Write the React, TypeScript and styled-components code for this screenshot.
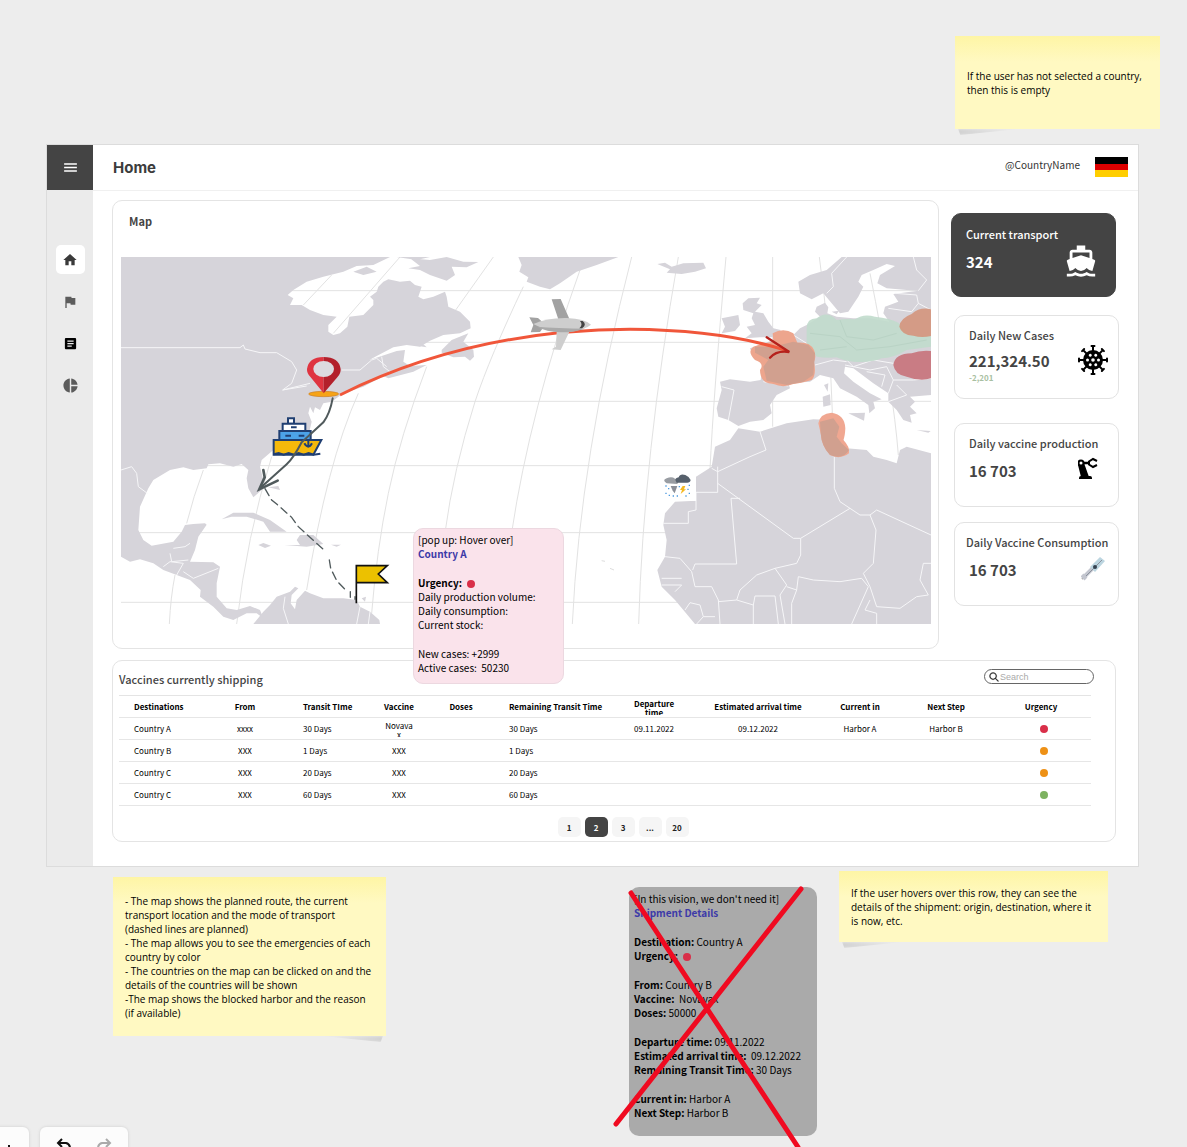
import React from "react";
import styled, { createGlobalStyle } from "styled-components";
import {
  MdArticle,
  MdDirectionsBoat,
  MdFlag,
  MdHome,
  MdMenu,
  MdPieChart,
} from "react-icons/md";
import { IoIosSearch } from "react-icons/io";

const sans = `"Noto Sans CJK SC", "Noto Sans", sans-serif`;

const GlobalStyle = createGlobalStyle`
  * { box-sizing: border-box; }
  body {
    margin: 0;
    background: #ededed;
    font-family: ${sans};
    color: #000;
  }
  button, input { font-family: inherit; }
  p, h1, h2, dl, dd { margin: 0; }
`;

/* ---------- Board ---------- */

const Board = styled.div`
  position: relative;
  min-height: 100vh;
  padding-top: 36px;
  overflow: hidden;
`;

const TopNotes = styled.div`
  display: flex;
  justify-content: flex-end;
  padding-right: 27px;
  margin-bottom: 15px;
`;

const BottomNotes = styled.div`
  display: flex;
  justify-content: space-between;
  align-items: flex-start;
  height: 280px;
  padding: 4px 79px 0 113px;
`;

const NoteGroup = styled.div`
  display: flex;
  align-items: flex-start;
  gap: 22px;
`;

const Note = styled.aside<{ $w: number; $h: number; $curl: "left" | "right"; $drop?: number }>`
  position: relative;
  display: flex;
  flex-direction: column;
  justify-content: center;
  width: ${(p) => p.$w}px;
  min-height: ${(p) => p.$h}px;
  margin-top: ${(p) => p.$drop ?? 0}px;
  padding: 0 12px;
  background: linear-gradient(#fef5a5, #fff9c2 26px, #fff9c2);
  font: 500 10px/14px "Open Sans", "Noto Sans", sans-serif;
  &::after {
    content: "";
    position: absolute;
    top: 100%;
    ${(p) => p.$curl}: 3px;
    width: 60px;
    height: 6px;
    background: linear-gradient(to ${(p) => (p.$curl === "left" ? "right" : "left")}, #d2d2d2, #ededed);
    clip-path: ${(p) =>
      p.$curl === "left" ? "polygon(0 0, 100% 0, 4% 100%)" : "polygon(0 0, 100% 0, 96% 100%)"};
    filter: blur(1px);
  }
`;

/* ---------- App frame ---------- */

const Frame = styled.div`
  display: grid;
  grid-template-columns: 46px 1fr;
  margin: 0 48px 0 46px;
  border: 1px solid #dcdcdc;
  background: #fff;
`;

const Sidebar = styled.nav`
  display: flex;
  flex-direction: column;
  align-items: center;
  background: #ebebeb;
`;

const MenuButton = styled.button`
  display: grid;
  place-items: center;
  width: 46px;
  height: 45px;
  margin-bottom: 55px;
  padding: 0;
  border: 0;
  background: #444;
  color: #fff;
`;

const NavButton = styled.button<{ $active?: boolean; $tone?: string }>`
  display: grid;
  place-items: center;
  width: 29px;
  height: 29px;
  margin-bottom: 13px;
  padding: 0;
  border: 0;
  border-radius: 5px;
  background: ${(p) => (p.$active ? "#fff" : "transparent")};
  color: ${(p) => p.$tone ?? "#5c5c5c"};
`;

const Body = styled.div`
  min-width: 0;
`;

const Header = styled.header`
  display: flex;
  align-items: center;
  height: 46px;
  padding: 0 10px 0 20px;
  border-bottom: 1px solid #f0f0f0;
`;

const PageTitle = styled.h1`
  flex: 1;
  color: #3c3c3c;
  font: 700 15px/20px Inter, "Open Sans", sans-serif;
`;

const Country = styled.span`
  margin-right: 15px;
  padding-bottom: 6px;
  color: #333;
  font-size: 10px;
  line-height: 14px;
`;

const Flag = styled.div`
  width: 33px;
  height: 20px;
  margin-bottom: 2px;
  background: linear-gradient(#000 0 33%, #dd0000 33% 67%, #ffce00 67%);
`;

const Main = styled.main`
  position: relative;
  padding: 9px 19px 24px 19px;
`;

const TopRow = styled.div`
  display: grid;
  grid-template-columns: 1fr 168px;
  column-gap: 12px;
  margin-bottom: 11px;
`;

const Panel = styled.section`
  border: 1px solid #e4e4e4;
  border-radius: 10px;
  background: #fff;
`;

const MapPanel = styled(Panel)`
  padding: 10px 7px 24px 8px;
`;

const MapTitle = styled.h2`
  margin-bottom: 26px;
  padding-left: 8px;
  color: #444;
  font-size: 11px;
  line-height: 20px;
`;

const MapSvg = styled.svg`
  display: block;
  width: 100%;
  height: auto;
`;

/* ---------- Stat cards ---------- */

const Stats = styled.div`
  display: flex;
  flex-direction: column;
  padding-top: 13px;
`;

const Card = styled.article<{ $dark?: boolean; $gap: number; $lift: number }>`
  display: grid;
  grid-template-columns: 1fr 32px;
  align-content: start;
  width: 165px;
  height: 84px;
  margin: 0 0 ${(p) => p.$gap}px ${(p) => (p.$dark ? 0 : 3)}px;
  padding: ${(p) => (p.$dark ? "10px 18px 0 14px" : "9px 9px 0 14px")};
  border: 1px solid ${(p) => (p.$dark ? "#444" : "#e2e2e2")};
  border-radius: 10px;
  background: ${(p) => (p.$dark ? "#444" : "#fff")};
  color: ${(p) => (p.$dark ? "#fff" : "#444")};
  svg {
    align-self: start;
    justify-self: center;
    margin-top: -${(p) => p.$lift}px;
  }
`;

const CardTitle = styled.h2<{ $wide?: boolean }>`
  grid-column: 1 / -1;
  margin: 0 -8px 6px ${(p) => (p.$wide ? -3 : 0)}px;
  font-size: 11px;
  font-weight: 500;
  line-height: 20px;
  white-space: nowrap;
`;

const CardValue = styled.p<{ $tight?: boolean }>`
  font-size: 15px;
  font-weight: 700;
  line-height: ${(p) => (p.$tight ? 20 : 24)}px;
`;

const Delta = styled.p`
  color: #a9bfa2;
  font-size: 8px;
  font-weight: 700;
  line-height: 14px;
`;

/* ---------- Shipping table ---------- */

const ShippingPanel = styled(Panel)`
  margin-right: 3px;
  padding: 8px 24px 4px 6px;
`;

const ShippingHead = styled.div`
  display: flex;
  justify-content: space-between;
  align-items: flex-start;
  height: 26px;
  margin-right: -3px;
`;

const ShippingTitle = styled.h2`
  color: #444;
  font-size: 11px;
  font-weight: 500;
  line-height: 20px;
`;

const SearchBox = styled.label`
  display: flex;
  align-items: center;
  width: 110px;
  height: 15px;
  padding-left: 3px;
  border: 1px solid #666;
  border-radius: 8px;
  color: #222;
  svg {
    stroke: currentColor;
    stroke-width: 14px;
  }
`;

const SearchInput = styled.input`
  width: 80px;
  height: 12px;
  padding: 0;
  border: 0;
  outline: 0;
  background: transparent;
  font: 9px/12px "Liberation Sans", Arial, sans-serif;
  &::placeholder {
    color: #aaa;
  }
`;

const Table = styled.table`
  width: 100%;
  table-layout: fixed;
  border-collapse: collapse;
  border-top: 1px solid #e4e4e4;
  font-size: 8px;
  line-height: 9px;
`;

const Row = styled.tr`
  height: 22px;
  border-bottom: 1px solid #e6e6e6;
`;

type Align = "left" | "center";

const HeadCell = styled.th<{ $align: Align; $indent: number }>`
  padding: 0 0 0 ${(p) => (p.$align === "left" ? p.$indent : 0)}px;
  text-align: ${(p) => p.$align};
  font-weight: 700;
  white-space: pre;
`;

const Cell = styled.td<{ $align: Align; $indent: number }>`
  padding: 0 ${(p) => (p.$align === "center" ? p.$indent : 0)}px 0 ${(p) => p.$indent}px;
  text-align: ${(p) => p.$align};
  word-break: break-all;
`;

const UrgencyCell = styled.td`
  padding: 0 0 0 5px;
  text-align: center;
`;

const TwoLines = styled.div`
  max-height: 16px;
  overflow: hidden;
`;

const Dot = styled.span<{ $color: string }>`
  display: inline-block;
  width: 8px;
  height: 8px;
  border-radius: 50%;
  background: ${(p) => p.$color};
  vertical-align: middle;
`;

const Pager = styled.nav`
  display: flex;
  justify-content: center;
  gap: 4px;
  padding: 11px 0 0 36px;
`;

const PageButton = styled.button<{ $current?: boolean }>`
  width: 23px;
  height: 20px;
  padding: 0;
  border: 0;
  border-radius: 5px;
  background: ${(p) => (p.$current ? "#444" : "#f5f5f5")};
  color: ${(p) => (p.$current ? "#fff" : "#222")};
  font-size: 8px;
  font-weight: 700;
`;

/* ---------- Info boxes ---------- */

const InfoBox = styled.div`
  font-size: 10px;
  line-height: 14px;
  white-space: pre;
`;

const CountryPopup = styled(InfoBox)`
  position: absolute;
  top: 337px;
  left: 320px;
  width: 151px;
  height: 156px;
  padding: 4px;
  border: 1px solid #ecd8e0;
  border-radius: 10px;
  background: #fae3eb;
`;

const ShipmentBox = styled(InfoBox)`
  position: relative;
  width: 188px;
  height: 249px;
  margin-top: 16px;
  padding: 5px;
  border-radius: 10px;
  background: #aaa;
`;

const Group = styled.div`
  margin-bottom: 15px;
`;

const Blue = styled.strong`
  color: #3d3aa8;
`;

const CrossOut = styled.svg`
  position: absolute;
  top: -2px;
  left: -17px;
  width: 194px;
  height: 270px;
`;

/* ---------- Board toolbars ---------- */

const Toolbars = styled.div`
  position: absolute;
  top: 1127px;
  left: -20px;
  display: flex;
  gap: 11px;
`;

const Toolbar = styled.div<{ $w: number }>`
  display: flex;
  justify-content: space-around;
  width: ${(p) => p.$w}px;
  height: 40px;
  padding: 10px 4px 0;
  border-radius: 6px;
  background: #fcfcfc;
  box-shadow: 0 0 3px #ccc;
`;

const ToolButton = styled.button`
  display: grid;
  place-items: center;
  width: 20px;
  height: 20px;
  padding: 0;
  border: 0;
  background: transparent;
`;

/* ---------- Drawings ---------- */

const Virus = () => (
  <svg width="32" height="32" viewBox="-16 -16 32 32">
    <circle r="10" />
    {[0, 45, 90, 135, 180, 225, 270, 315].map((a) => (
      <g key={a} transform={`rotate(${a})`}>
        <path d="M0-9V-13M-1.500-14H1.500" stroke="#000" strokeWidth="2" strokeLinecap="round" />
      </g>
    ))}
    <g fill="#fff">
      <circle r="1.800" />
      {[0, 60, 120, 180, 240, 300].map((a) => (
        <circle key={a} cx="5.500" r="1.500" transform={`rotate(${a})`} />
      ))}
    </g>
  </svg>
);

const RobotArm = () => (
  <svg width="30" height="24" viewBox="3 0 30 24" fill="none" stroke="#000">
    <path d="M3 8 9 6 14 20H6Z" fill="#000" stroke="none" />
    <path d="M4 22v-1q0-2 2-2h9q2 0 2 2v1Z" fill="#000" stroke="none" />
    <circle cx="6" cy="6" r="2.500" fill="#fff" strokeWidth="2" />
    <path d="M9 6h5" strokeWidth="2.500" />
    <path d="M22 4 18 2l-4 2.500v3L18 10l4-2" strokeWidth="2" />
  </svg>
);

const Syringe = () => (
  <svg width="24" height="26" viewBox="0 0 24 26">
    <path d="M1 23 4 20" stroke="#aaa" strokeWidth="2" />
    <path d="M1 19 5 23M3 21 14 10" stroke="#c3c6cf" strokeWidth="4" />
    <path d="M9 11 19 1 24 5 14 16Z" fill="#bcd5e0" />
    <path d="M5 20 21 4" stroke="#8b929d" strokeWidth="1" />
    <circle cx="14" cy="11" r="2" fill="#344250" />
  </svg>
);

const WorldMap = () => (
  <MapSvg viewBox="33 21 2430 1101" role="img" aria-label="Shipping routes across the Atlantic">
    <path
      fill="none"
      stroke="#e2e2e2"
      strokeWidth="3"
      d="M33 122H2463M33 277H2463M33 454H2463M33 647H2463M33 848H2463M33 1057H2463
      M195 975Q182 1040 178 1122M280 660Q250 740 230 820M485 620Q410 860 380 1122M665 75 580 165
      M870 21 670 250M1150 21 1030 190M745 430Q650 640 590 1020
      M950 350Q870 560 835 730Q800 900 785 1090
      M1240 110Q1140 320 1095 455Q1030 660 1005 848
      M1410 60Q1260 480 1205 848M1565 21Q1410 620 1387 1122M1705 21Q1600 620 1586 1122
      M1848 21Q1810 440 1800 660M1988 21V530M2128 21Q2160 250 2168 510M2280 70Q2350 420 2365 615"
    />
    <g fill="#d6d4da">
      <path d="M33 21H840L790 45 740 48 700 65 640 80 590 95 550 120 533 135 550 145 540 165 575 165 600 180 640 195 680 200 655 225 655 245 670 255 690 250 712 230 718 200 760 195 790 165 790 150 780 140 800 125 805 110 820 95 835 88 870 95 900 92 915 105 935 110 925 140 940 148 970 140 1005 125 1010 140 1015 170 1050 185 1080 215 1082 235 1050 250 1000 255 960 272 930 290 890 285 850 292 800 318 778 330 815 318 860 303 885 300 880 335 900 348 950 345 910 365 835 385 820 378 760 410 700 430 665 455 640 460 630 480 615 472 610 490 600 470 595 490 605 515 598 545 580 560 490 600 455 630 450 650 460 690 455 720 430 742 415 715 410 685 415 660 395 642 370 650 330 640 295 643 290 655 250 660 220 652 180 660 130 690 115 715 90 770 85 840 100 870 125 887 190 875 215 845 225 825 250 822 285 820 290 824 265 860 255 900 240 935 310 937 330 950 320 1000 320 1040 350 1075 380 1080 420 1068 450 1080 460 1105 440 1090 410 1090 370 1110 340 1100 310 1070 270 1040 272 1020 240 990 200 975 160 960 130 940 90 928 60 935 33 920Z" />
      <path d="M430 1122 460 1085 480 1065 500 1040 540 1025 555 1010 565 1015 545 1035 542 1060 555 1078 560 1050 585 1022 600 1030 640 1045 700 1045 740 1050 750 1070 780 1085 808 1110 810 1122Z" />
      <path d="M335 808 370 788 430 788 480 810 530 845 480 845 460 815 410 800 365 800ZM523 885 570 885 560 870 570 855 610 855 640 882 590 890ZM445 885 460 879 483 887 465 894ZM663 884H693L680 890ZM730 65 770 50 800 65 760 75ZM475 712 505 708 510 720M755 1045 768 1040 765 1055Z" />
      <path d="M860 21 960 21 920 30ZM900 25 960 30 1010 21 1060 35 1105 36 1070 52 1025 50 1035 75 1010 92 960 75 930 60 895 55 930 48Z" />
      <path d="M1225 21 1235 45 1228 65 1255 82 1250 95 1290 110 1320 118 1350 100 1400 65 1460 45 1515 25 1525 21Z" />
      <path d="M995 300 1025 270 1075 250 1060 275 1090 300 1092 320 1080 332 1065 320 1030 322 995 308ZM918 280 940 283 950 292 925 288Z" />
    </g>
    <g transform="translate(1590)">
      <g fill="#d6d4da">
        <path d="M52 42 75 38 95 50 130 40 190 38 198 55 165 65 125 72 80 68 90 58Z" />
        <path d="M325 145 360 143 350 160 365 165 345 185 370 190 385 215 400 235 422 240 410 262 360 262 315 265 335 250 320 230 345 225 335 205 340 190 310 180 308 160ZM245 205 295 195 300 225 285 243 245 250 255 230Z" />
        <path d="M605 21 560 60 510 75 475 95 480 130 515 148 550 130 575 160 600 190 625 185 655 140 670 110 655 95 665 75 700 60 740 42 765 48 720 75 712 100 740 115 800 120 835 122 760 132 775 155 735 170 730 190 748 215 690 205 640 205 590 200 562 190 565 172 555 158 530 170 525 185 540 200 500 225 480 235 460 255 400 270 330 295 340 320 370 340 365 370 362 390 330 395 270 388 240 395 245 420 230 475 235 500 265 510 295 528 330 515 370 510 395 490 390 465 410 435 450 415 445 400 510 395 540 375 580 385 600 415 650 440 685 465 688 490 705 475 700 455 725 448 690 430 640 395 612 370 615 350 640 355 700 400 745 430 745 455 770 480 790 510 815 518 810 495 830 490 810 470 825 455 810 440 873 435V21Z" />
        <path d="M873 610 800 590 780 600 770 640 740 630 700 620 680 600 620 595 600 540 575 510 520 508 440 520 360 545 295 535 270 570 225 590 215 650 168 680V752L105 755 75 790 70 825 80 870 75 920 52 960 65 1010 105 1050 130 1080 165 1122H873Z" />
        <path d="M548 440 570 433 572 465 550 470ZM552 405 565 400 563 425ZM625 490 675 488 672 512ZM830 540 872 543 865 548ZM575 185 597 182 590 193Z" />
      </g>
      <g fill="none" stroke="#f6f6f8" strokeWidth="3">
        <path d="M233 650V727H168V780L145 785V820H70M215 655 233 665 330 620 378 600 360 545M233 700 460 865H482L630 775 600 755 583 715V620M630 775 660 795H690L710 780 873 855M273 745 290 942H165L158 960M482 865V915L470 940 405 955 350 975 300 1020 290 1050 340 1065 345 1038H405L415 1122M273 745 300 745M690 795 708 840 700 940 670 970 690 1010 710 1070 780 1075 830 1040 865 1035 840 990 850 940H873M405 955 440 1005 420 1035 435 1122M440 1010 470 1020 455 1060V1122M470 1020 475 980 520 990 600 995 665 985 685 1010 635 1122M75 920 120 925 155 965 165 1010 215 1010 235 1050 240 1122M65 1005H125L105 1025M65 985 125 985M235 1055 290 1050M340 1065V1122M135 1080 150 1058 180 1065 190 1100 170 1122M190 1100H225M690 1050 675 1080 710 1090V1122" />
        <path d="M620 21 575 70 580 110 560 130M820 21 830 60 860 90 835 122M765 130 830 135 835 160 815 185 745 175M835 160 873 180M245 410 282 420 265 510M370 395 445 408M615 345 690 360 740 350 760 390 745 430M680 365 735 375 725 410M760 390 820 390 873 385M745 455 800 435M620 330 640 350 700 330 760 340M460 255 500 280M800 435 770 405M525 345 580 330 620 335" />
      </g>
      <path fill="#c1dbcc" fillOpacity=".9" d="M500 235Q500 205 530 205 560 180 590 210 620 205 645 208 670 190 705 200 750 205 775 218L810 255 873 258V290L800 300Q760 325 725 325 690 340 640 335 610 332 590 322 560 325 530 320L500 280Z" />
      <path d="M510 250 600 260 650 300 750 290 860 270M600 210 620 260 700 270 770 250M540 300 620 290" fill="none" stroke="#b9d3c5" strokeWidth="3" />
      <path fill="#d4957c" fillOpacity=".9" d="M873 178Q840 170 815 192 780 205 778 230 785 255 820 257 845 265 873 258Z" />
      <path fill="#c97c84" d="M873 303Q840 300 815 310 765 310 760 345 765 375 800 380 840 395 873 385Z" />
      <path fill="#eda58d" d="M398 250Q430 232 460 250L472 278Q510 275 522 300 530 320 522 335 530 375 515 390 480 400 460 402 430 415 400 402 360 400 360 360 375 340 345 330 320 305 340 290 370 280 400 275Z" />
      <path fill="#d1a08f" d="M345 290 400 290 460 275 505 285 525 310 520 375 490 395 440 405 380 392 370 350 385 330 345 308Z" />
      <path fill="#f0a791" d="M535 520Q540 490 575 488 615 495 616 535 615 560 610 570 630 590 627 610 600 630 570 615 545 590 542 550Z" />
      <path fill="#d1a08f" d="M540 515 580 505 598 530 590 560 605 580 627 600Q610 630 570 615 545 590 542 550Z" />
      <g>
        <path fill="#fff" d="M66 672H168V752H66Z" />
        <path fill="#999da3" d="M80 700Q65 690 80 685 95 678 105 686 120 690 112 702Z" />
        <path fill="#56606c" d="M110 698Q100 685 116 682 120 670 136 675 148 680 152 690 150 700 138 698Z" />
        <path fill="#8b8f98" d="M92 708H112L104 730 98 722Z" />
        <path fill="#f5b921" d="M128 708H136L132 718H138L122 732 126 720H120Z" />
        <path d="M78 706v4M86 714v4M78 728v4M88 734v4M100 736v4M112 736v4M118 708v4M148 704v4M144 716v4M148 728v4M138 736v4" stroke="#4d9ae0" strokeWidth="4" />
      </g>
    </g>
    <g fill="none" stroke="#f6f6f8" strokeWidth="3">
      <path d="M33 293H390L400 285 405 297 450 308 500 308 545 335 560 360 545 400 518 420 600 400M695 360H750L785 330 800 325 830 350M518 420 590 408M33 660 65 650 80 670 85 710 112 730M180 910 185 935 235 930M160 950 180 935 220 940 200 975M220 965 250 985 325 955M190 895 225 890 240 880M525 1040 520 1075 535 1122M750 1070 740 1122M780 1085 775 1122M815 320 820 350 840 365" />
    </g>
    <path d="M690 435Q1080 240 1560 238 1840 240 2030 302" fill="none" stroke="#f0563a" strokeWidth="9" />
    <path d="M1970 262 2038 306Q2000 300 1980 323" fill="none" stroke="#b5211c" strokeWidth="7" strokeLinecap="round" />
    <g>
      <path fill="#a2a2a2" d="M1325 148 1352 147 1378 206 1345 208ZM1258 202 1284 204 1306 224 1290 246 1262 247 1270 225Z" />
      <path fill="#cecece" d="M1340 245 1378 245 1352 300 1325 298 1338 290Z" />
      <path fill="#cecece" d="M1270 222Q1310 203 1370 204 1425 206 1443 224 1425 240 1370 247 1310 245 1270 222Z" />
      <path fill="#aaa" d="M1280 230Q1340 235 1425 236 1390 248 1350 247 1310 245 1280 230Z" />
      <path d="M1410 213H1418Q1432 224 1416 235H1408Q1420 224 1410 213Z" fill="#444" />
    </g>
    <g>
      <ellipse cx="641" cy="432" rx="45" ry="8" fill="#f6a316" stroke="#c87e28" strokeWidth="2" />
      <path fill="#df3440" d="M641 430 602 382Q590 370 591 357 596 321 641 321Z" />
      <path fill="#b3202b" d="M641 430 682 382Q693 370 692 357 687 321 641 321Z" />
      <ellipse cx="641" cy="357" rx="31" ry="24" fill="#dcdadf" />
    </g>
    <g stroke="#203f72" strokeWidth="6">
      <path fill="#fff" d="M534 505H552V521H534Z" />
      <path fill="#fff" d="M518 521H586V543H518Z" />
      <path fill="#4ca3e8" d="M508 543H602V570H508Z" />
      <path fill="#f5b90b" d="M491 570H634L610 614H491Z" />
      <path d="M543 532H560M526 557H543M566 557H583" />
      <path fill="none" d="M595 568V592M583 580Q595 600 606 580M491 613l15-4 15 5 15-5 15 5 15-5 15 5 15-5 15 5 20-3" />
    </g>
    <g fill="none" stroke="#505a5c" strokeLinecap="round">
      <path strokeWidth="6" d="M668 445Q660 490 640 517L575 577Q550 625 530 643L450 715" />
      <path strokeWidth="8" d="M460 660 464 682 448 718 503 692" />
      <path strokeWidth="4" strokeDasharray="24 14" d="M465 716 485 750 500 762 545 802 565 830 642 900M658 930 662 955 680 992 705 1018" />
      <path strokeWidth="4" d="M721 1025V1042M735 1040V1048" />
    </g>
    <path d="M739 1060V947H832L805 972 832 998H739" fill="#ecc100" stroke="#111" strokeWidth="5" />
    <path d="M1475 932l10 2M1500 955l12 5" stroke="#ddd" strokeWidth="3" />
  </MapSvg>
);

/* ---------- Data ---------- */

const columns: { label: string; width: number; align: Align; indent: number }[] = [
  { label: "Destinations", width: 68, align: "left", indent: 15 },
  { label: "From", width: 116, align: "center", indent: 0 },
  { label: "Transit TIme", width: 76, align: "left", indent: 0 },
  { label: "Vaccine", width: 40, align: "center", indent: 6 },
  { label: "Doses", width: 84, align: "center", indent: 0 },
  { label: "Remaining Transit Time", width: 108, align: "left", indent: 6 },
  { label: "Departure\ntime", width: 86, align: "center", indent: 0 },
  { label: "Estimated arrival time", width: 122, align: "center", indent: 0 },
  { label: "Current in", width: 82, align: "center", indent: 0 },
  { label: "Next Step", width: 90, align: "center", indent: 0 },
  { label: "Urgency", width: 100, align: "center", indent: 0 },
];

const red = "#d92f49";
const shipments: { cells: string[]; color: string }[] = [
  {
    cells: ["Country A", "xxxx", "30 Days", "Novavax", "", "30 Days", "09.11.2022", "09.12.2022", "Harbor A", "Harbor B"],
    color: red,
  },
  { cells: ["Country B", "XXX", "1 Days", "XXX", "", "1 Days", "", "", "", ""], color: "#ee9116" },
  { cells: ["Country C", "XXX", "20 Days", "XXX", "", "20 Days", "", "", "", ""], color: "#ee9116" },
  { cells: ["Country C", "XXX", "60 Days", "XXX", "", "60 Days", "", "", "", ""], color: "#7db260" },
];

const App = () => (
  <>
    <GlobalStyle />
    <Board>
      <TopNotes>
        <Note $w={205} $h={93} $curl="left">
          If the user has not selected a country, then this is empty
        </Note>
      </TopNotes>

      <Frame>
        <Sidebar aria-label="Sections">
          <MenuButton aria-label="Menu">
            <MdMenu size={17} />
          </MenuButton>
          <NavButton aria-label="Home" $active $tone="#3a3a3a">
            <MdHome size={16} />
          </NavButton>
          <NavButton aria-label="Reports">
            <MdFlag size={16} />
          </NavButton>
          <NavButton aria-label="Articles" $tone="#000">
            <MdArticle size={15} />
          </NavButton>
          <NavButton aria-label="Statistics">
            <MdPieChart size={17} />
          </NavButton>
        </Sidebar>

        <Body>
          <Header>
            <PageTitle>Home</PageTitle>
            <Country>@CountryName</Country>
            <Flag role="img" aria-label="Germany" />
          </Header>

          <Main>
            <TopRow>
              <MapPanel>
                <MapTitle>Map</MapTitle>
                <WorldMap />
              </MapPanel>
              <Stats>
                <Card $dark $gap={18} $lift={6}>
                  <CardTitle>Current transport</CardTitle>
                  <CardValue>324</CardValue>
                  <MdDirectionsBoat size={34} />
                </Card>
                <Card $gap={24} $lift={7}>
                  <CardTitle>Daily New Cases</CardTitle>
                  <div>
                    <CardValue $tight>221,324.50</CardValue>
                    <Delta>-2,201</Delta>
                  </div>
                  <Virus />
                </Card>
                <Card $gap={15} $lift={2}>
                  <CardTitle>Daily vaccine production</CardTitle>
                  <CardValue>16 703</CardValue>
                  <RobotArm />
                </Card>
                <Card $gap={0} $lift={2}>
                  <CardTitle $wide>Daily Vaccine Consumption</CardTitle>
                  <CardValue>16 703</CardValue>
                  <Syringe />
                </Card>
              </Stats>
            </TopRow>

            <ShippingPanel>
              <ShippingHead>
                <ShippingTitle>Vaccines currently shipping</ShippingTitle>
                <SearchBox>
                  <IoIosSearch size={12} />
                  <SearchInput type="search" placeholder="Search" aria-label="Search shipments" />
                </SearchBox>
              </ShippingHead>
              <Table>
                <colgroup>
                  {columns.map((c) => (
                    <col key={c.label} style={{ width: `${(c.width / 972) * 100}%` }} />
                  ))}
                </colgroup>
                <thead>
                  <Row>
                    {columns.map((c) => (
                      <HeadCell key={c.label} scope="col" $align={c.align} $indent={c.indent}>
                        {c.label.includes("\n") ? <TwoLines>{c.label}</TwoLines> : c.label}
                      </HeadCell>
                    ))}
                  </Row>
                </thead>
                <tbody>
                  {shipments.map((s, i) => (
                    <Row key={i}>
                      {s.cells.map((text, j) => (
                        <Cell key={j} $align={columns[j].align} $indent={columns[j].indent}>
                          {text === "Novavax" ? <TwoLines>{text}</TwoLines> : text}
                        </Cell>
                      ))}
                      <UrgencyCell>
                        <Dot $color={s.color} />
                      </UrgencyCell>
                    </Row>
                  ))}
                </tbody>
              </Table>
              <Pager aria-label="Pages">
                {["1", "2", "3", "...", "20"].map((n) => (
                  <PageButton key={n} $current={n === "2"}>
                    {n}
                  </PageButton>
                ))}
              </Pager>
            </ShippingPanel>

            <CountryPopup>
              <Group>
                <p>[pop up: Hover over]</p>
                <Blue>Country A</Blue>
              </Group>
              <Group>
                <p>
                  <strong>Urgency: </strong> <Dot $color={red} />
                </p>
                <p>Daily production volume:</p>
                <p>Daily consumption:</p>
                <p>Current stock:</p>
              </Group>
              <p>New cases: +2999</p>
              <p>{"Active cases:  50230"}</p>
            </CountryPopup>
          </Main>
        </Body>
      </Frame>

      <BottomNotes>
        <Note $w={273} $h={159} $curl="right" $drop={6}>
          <p>- The map shows the planned route, the current transport location and the mode of transport (dashed lines are planned)</p>
          <p>- The map allows you to see the emergencies of each country by color</p>
          <p>- The countries on the map can be clicked on and the details of the countries will be shown</p>
          <p>-The map shows the blocked harbor and the reason (if available)</p>
        </Note>
        <NoteGroup>
          <ShipmentBox>
            <Group>
              <p>[In this vision, we don't need it]</p>
              <Blue>Shipment Details</Blue>
            </Group>
            <Group>
              <p><strong>Destination:</strong> Country A</p>
              <p><strong>Urgency:</strong>{"  "}<Dot $color={red} /></p>
            </Group>
            <Group>
              <p><strong>From:</strong> Country B</p>
              <p><strong>Vaccine:</strong>{"  Novavax"}</p>
              <p><strong>Doses:</strong> 50000</p>
            </Group>
            <Group>
              <p><strong>Departure time:</strong> 09.11.2022</p>
              <p><strong>Estimated arrival time:</strong>{"  09.12.2022"}</p>
              <p><strong>Remaining Transit Time:</strong> 30 Days</p>
            </Group>
            <p><strong>Current in:</strong> Harbor A</p>
            <p><strong>Next Step:</strong> Harbor B</p>
            <CrossOut viewBox="0 0 194 270" fill="none" stroke="#f00a20" strokeWidth="5" strokeLinecap="round" aria-hidden="true">
              <path d="M19 8 186 262M189 4 4 239" />
            </CrossOut>
          </ShipmentBox>
          <Note $w={269} $h={71} $curl="left">
            If the user hovers over this row, they can see the details of the shipment: origin, destination, where it is now, etc.
          </Note>
        </NoteGroup>
      </BottomNotes>

      <Toolbars>
        <Toolbar $w={49}>
          <ToolButton aria-label="Zoom in">
            <svg width="16" height="16" viewBox="0 0 16 16" stroke="#111" strokeWidth="2">
              <path d="M12 6v8M8 10h8" />
            </svg>
          </ToolButton>
        </Toolbar>
        <Toolbar $w={88}>
          <ToolButton aria-label="Undo">
            <svg width="18" height="18" viewBox="0 0 18 18" fill="none" stroke="#111" strokeWidth="2">
              <path d="M7 1 3 5l4 4M3 5h8q5 1 4 9" />
            </svg>
          </ToolButton>
          <ToolButton aria-label="Redo">
            <svg width="18" height="18" viewBox="0 0 18 18" fill="none" stroke="#aaa" strokeWidth="2">
              <path d="M11 1l4 4-4 4M15 5H7Q2 6 3 14" />
            </svg>
          </ToolButton>
        </Toolbar>
      </Toolbars>
    </Board>
  </>
);

export default App;
